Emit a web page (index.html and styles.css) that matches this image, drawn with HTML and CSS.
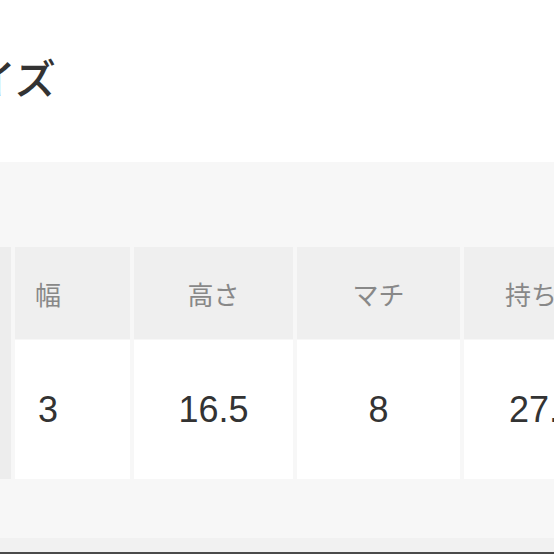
FILE: index.html
```html
<!DOCTYPE html>
<html lang="ja">
<head>
<meta charset="utf-8">
<title>サイズ</title>
<link rel="stylesheet" href="styles.css">
</head>
<body>
<div class="page">
  <h1 class="title">サイズ</h1>
  <section class="panel">
    <div class="size-grid">
      <div class="label-cell"></div>
      <div class="head first">幅</div>
      <div class="head">高さ</div>
      <div class="head">マチ</div>
      <div class="head">持ち手</div>
      <div class="val first">3</div>
      <div class="val">16.5</div>
      <div class="val">8</div>
      <div class="val">27.5</div>
    </div>
  </section>
  <div class="band"></div>
  <div class="edge"></div>
</div>
</body>
</html>
```

FILE: styles.css
```css
html, body {
  margin: 0;
  padding: 0;
  background: #fff;
  overflow: hidden;
}
body {
  width: 554px;
  height: 554px;
}
.page {
  margin-left: -80px;
  width: 720px;
  font-family: "Noto Sans CJK JP", "Noto Sans", sans-serif;
}
.title {
  margin: 0;
  padding: 55px 0 0 14px;
  height: 162px;
  box-sizing: border-box;
  font-size: 41px;
  line-height: 42px;
  font-weight: 500;
  color: #333;
}
.panel {
  background: #f7f7f7;
  height: 376px;
  padding-top: 85px;
  box-sizing: border-box;
}
.size-grid {
  display: grid;
  grid-template-columns: 91px 115px 159px 163px 160px;
  grid-template-rows: 92px 139px;
  column-gap: 4px;
  row-gap: 1px;
}
.label-cell {
  grid-row: 1 / span 2;
  background: #ededed;
}
.head {
  background: #efefef;
  color: #888;
  font-size: 26px;
  display: flex;
  align-items: center;
  justify-content: center;
}
.val {
  background: #fff;
  color: #333;
  font-family: "Liberation Sans", Arial, sans-serif;
  font-size: 36px;
  display: flex;
  align-items: center;
  justify-content: center;
}
.first {
  padding-right: 49px;
}
.band {
  height: 14px;
  background: #f1f1f1;
}
.edge {
  height: 2px;
  background: #4a4a4a;
}
```
